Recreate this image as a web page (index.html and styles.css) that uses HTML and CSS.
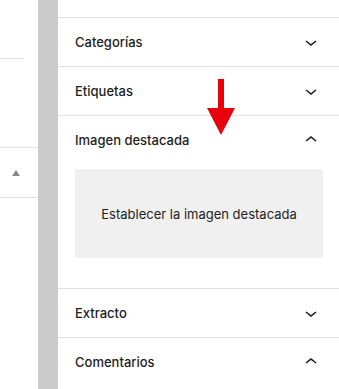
FILE: index.html
```html
<!DOCTYPE html>
<html lang="es">
<head>
  <meta charset="UTF-8">
  <title>Ajustes de entrada</title>
  <link rel="stylesheet" href="styles.css">
</head>
<body>
  <div class="layout">
    <div class="side">
      <div class="side-top"></div>
      <div class="side-row"><span class="tri"></span></div>
    </div>

    <div class="gutter"></div>

    <div class="panel">
      <div class="panel-top"></div>

      <div class="section">
        <div class="section-head">
          <span>Categorías</span>
          <svg class="chev" viewBox="0 0 24 24" width="24" height="24"><path d="M17.5 11.6 12 16l-5.5-4.4.9-1.2L12 14l4.5-3.6 1 1.2z"/></svg>
        </div>
      </div>

      <div class="section">
        <div class="section-head">
          <span>Etiquetas</span>
          <svg class="chev" viewBox="0 0 24 24" width="24" height="24"><path d="M17.5 11.6 12 16l-5.5-4.4.9-1.2L12 14l4.5-3.6 1 1.2z"/></svg>
        </div>
      </div>

      <div class="section open">
        <div class="section-head">
          <span>Imagen destacada</span>
          <svg class="chev" viewBox="0 0 24 24" width="24" height="24"><path d="M6.5 12.4 12 8l5.5 4.4-.9 1.2L12 10l-4.5 3.6-1-1.2z"/></svg>
        </div>
        <div class="section-body">
          <button class="featured">Establecer la imagen destacada</button>
        </div>
      </div>

      <div class="section">
        <div class="section-head">
          <span>Extracto</span>
          <svg class="chev" viewBox="0 0 24 24" width="24" height="24"><path d="M17.5 11.6 12 16l-5.5-4.4.9-1.2L12 14l4.5-3.6 1 1.2z"/></svg>
        </div>
      </div>

      <div class="section last">
        <div class="section-head">
          <span>Comentarios</span>
          <svg class="chev" viewBox="0 0 24 24" width="24" height="24"><path d="M6.5 12.4 12 8l5.5 4.4-.9 1.2L12 10l-4.5 3.6-1-1.2z"/></svg>
        </div>
      </div>

      <!-- flecha roja de la captura -->
      <svg class="arrow" viewBox="0 0 30 58" width="30" height="58">
        <rect x="11" y="0" width="6" height="31" fill="#e8000b"/>
        <polygon points="0,29 28,29 14,56" fill="#e8000b"/>
      </svg>
    </div>
  </div>
</body>
</html>
```

FILE: styles.css
```css
body {
  margin: 0;
  padding: 0;
  background-color: #fff;
  font-family: Inter, "Noto Sans", Arial, sans-serif;
  color: #1e1e1e;
  overflow: hidden;
}
.layout {
  display: flex;
  height: 389px;
}
.side {
  width: 38px;
  flex: none;
  background-color: #fff;
}
.side-top {
  width: 24px;
  height: 58px;
  border-bottom: 1px solid #e0e0e0;
  margin-bottom: 88px;
}
.side-row {
  height: 49px;
  border-top: 1px solid #e0e0e0;
  border-bottom: 1px solid #e0e0e0;
  display: flex;
  align-items: center;
  padding-left: 12px;
}
.tri {
  width: 0;
  height: 0;
  border-left: 4px solid transparent;
  border-right: 4px solid transparent;
  border-bottom: 6px solid #8a8a8a;
}
.gutter {
  width: 20px;
  flex: none;
  background-color: #cbcbcb;
}
.panel {
  flex: 1;
  position: relative;
  background-color: #fff;
}
.panel-top {
  height: 17px;
  border-bottom: 1px solid #e0e0e0;
}
.section {
  border-bottom: 1px solid #e0e0e0;
}
.section.last {
  border-bottom: none;
}
.section-head {
  height: 48px;
  display: flex;
  align-items: center;
  justify-content: space-between;
  padding: 0 16px 0 17px;
  font-size: 13px;
  font-weight: 500;
}
.chev {
  fill: #1e1e1e;
}
.section-body {
  padding: 5px 16px 30px 17px;
}
.featured {
  display: block;
  width: 100%;
  height: 89px;
  border: none;
  border-radius: 2px;
  background-color: #f0f0f0;
  color: #1e1e1e;
  font-family: Inter, "Noto Sans", Arial, sans-serif;
  font-size: 13px;
  padding: 0;
}
.arrow {
  position: absolute;
  left: 149px;
  top: 79px;
}
```
